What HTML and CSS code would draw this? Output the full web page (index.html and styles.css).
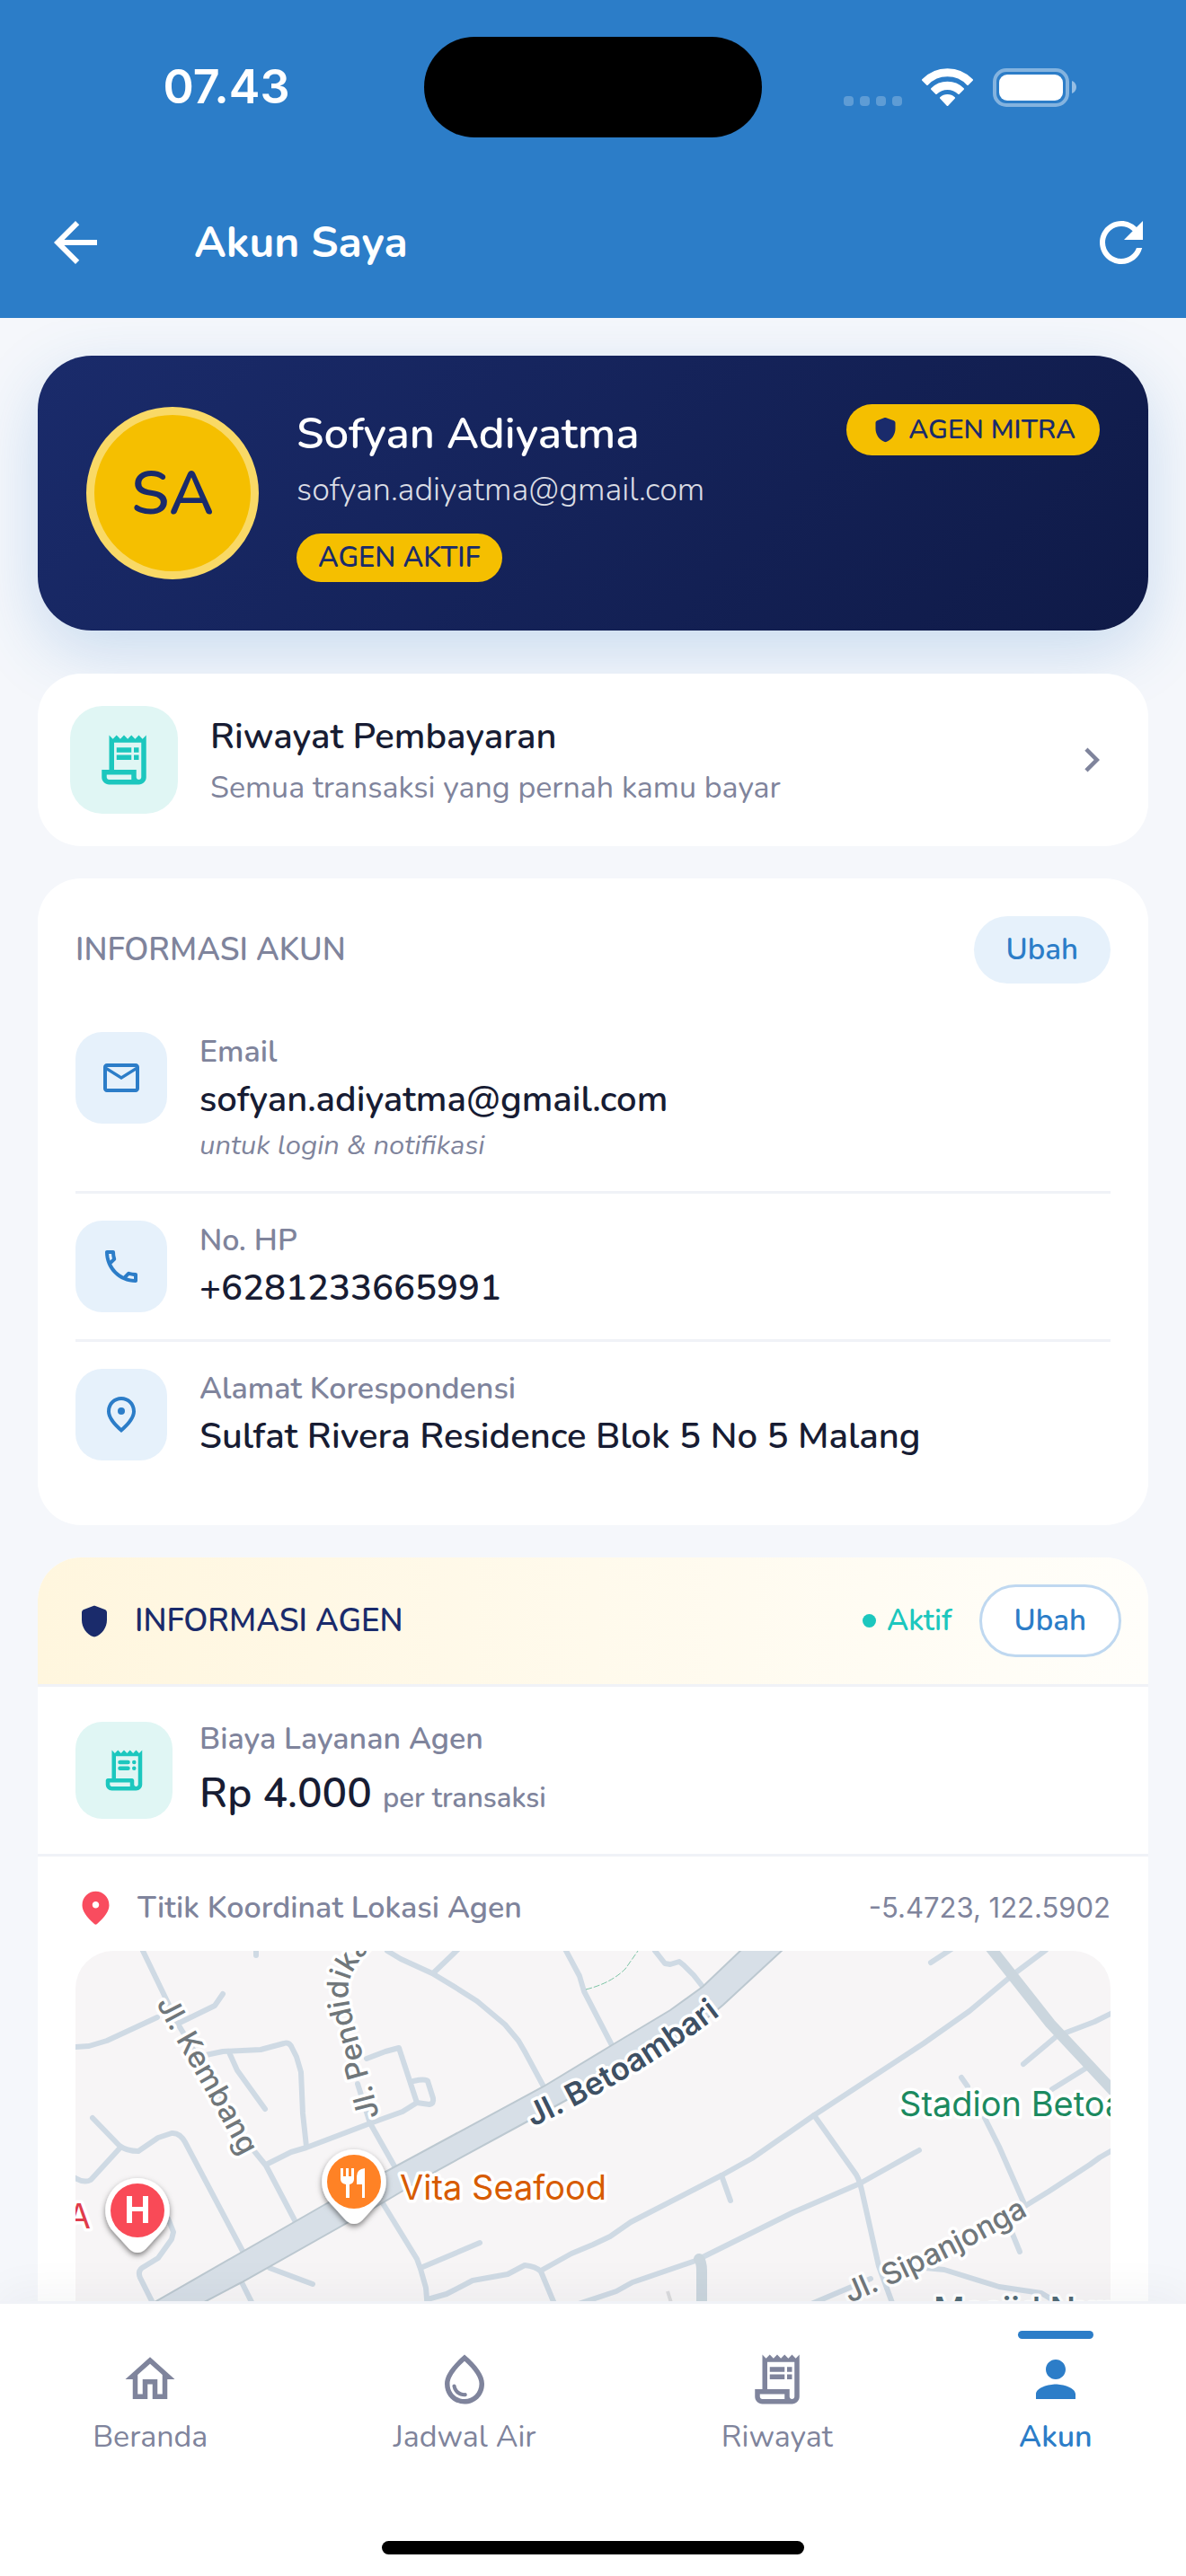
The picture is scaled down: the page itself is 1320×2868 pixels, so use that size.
FILE: index.html
```html
<!DOCTYPE html>
<html lang="id">
<head>
    <meta charset="UTF-8">
    <meta name="viewport" content="width=device-width, initial-scale=1.0">
    <title>Akun Saya</title>
    <link rel="stylesheet" href="styles.css">
</head>
<body>
    <!-- shared icons -->
    <svg class="sprite" aria-hidden="true">
        <symbol id="icon-receipt" viewBox="0 0 24 24">
            <path d="M19.5 3.5L18 2l-1.5 1.5L15 2l-1.5 1.5L12 2l-1.5 1.5L9 2 7.5 3.5 6 2v14H3v3c0 1.66 1.34 3 3 3h12c1.66 0 3-1.34 3-3V2l-1.5 1.5zM15 20H6c-.55 0-1-.45-1-1v-1h10v2zm4-1c0 .55-.45 1-1 1s-1-.45-1-1v-3H8V5h11v14z"/>
            <path d="M9 7h6v2H9zM16 7h2v2h-2zM9 10h6v2H9zM16 10h2v2h-2z"/>
        </symbol>
        <symbol id="icon-receipt-round" viewBox="0 0 24 24">
            <path d="M19.5 3.5L18 2l-1.5 1.5L15 2l-1.5 1.5L12 2l-1.5 1.5L9 2 7.5 3.5 6 2v14H4c-.55 0-1 .45-1 1v2c0 1.66 1.34 3 3 3h12c1.66 0 3-1.34 3-3V2l-1.5 1.5zM15 20H6c-.55 0-1-.45-1-1v-1h10v2zm4-1c0 .55-.45 1-1 1s-1-.45-1-1v-2c0-.55-.45-1-1-1H8V5h11v14z"/>
            <rect x="9" y="7" width="6" height="2" rx="1"/>
            <rect x="9" y="10" width="6" height="2" rx="1"/>
            <circle cx="17" cy="8" r="1"/>
            <circle cx="17" cy="11" r="1"/>
        </symbol>
        <symbol id="icon-shield" viewBox="0 0 24 24">
            <path d="M11.3 2.26l-6 2.25C4.52 4.81 4 5.55 4 6.39v4.7c0 4.83 3.13 9.37 7.43 10.75.37.12.77.12 1.14 0C16.87 20.46 20 15.93 20 11.1V6.4c0-.83-.52-1.58-1.3-1.87l-6-2.25c-.45-.18-.95-.18-1.4-.02z"/>
        </symbol>
    </svg>

    <div class="app">
        <header class="header">
            <div class="status-bar">
                <span class="status-time">07.43</span>
                <span class="island"></span>
                <div class="status-icons">
                    <div class="signal"><i></i><i></i><i></i><i></i></div>
                    <svg class="wifi" viewBox="0 0 57 42" aria-hidden="true">
                        <path d="M1 13A38 38 0 0 1 56 13L51 18A31 31 0 0 0 6 18z"/>
                        <path d="M11 23A25 25 0 0 1 46 23L41 28A18 18 0 0 0 16 28z"/>
                        <path d="M21 33A11 11 0 0 1 36 33L28.500 41z"/>
                    </svg>
                    <svg class="battery" viewBox="0 0 94 43" aria-hidden="true">
                        <rect class="battery-case" x="2" y="2" width="81" height="39" rx="13"/>
                        <rect x="7" y="7" width="71" height="29" rx="9"/>
                        <path class="battery-cap" d="M88 14c3 1 5 4 5 7s-2 6-5 7z"/>
                    </svg>
                </div>
            </div>
            <div class="toolbar">
                <button class="icon-btn" type="button" aria-label="Kembali">
                    <svg viewBox="0 0 24 24"><path d="M20 11H7.83l5.59-5.59L12 4l-8 8 8 8 1.41-1.41L7.83 13H20v-2z"/></svg>
                </button>
                <h1>Akun Saya</h1>
                <button class="icon-btn" type="button" aria-label="Muat ulang">
                    <svg viewBox="0 0 24 24"><path d="M17.65 6.35C16.2 4.9 14.21 4 12 4c-4.42 0-7.99 3.58-7.99 8s3.57 8 7.99 8c3.73 0 6.84-2.55 7.73-6h-2.08c-.82 2.33-3.04 4-5.65 4-3.31 0-6-2.69-6-6s2.69-6 6-6c1.66 0 3.14.69 4.22 1.78L13 11h7V4l-2.35 2.35z"/></svg>
                </button>
            </div>
        </header>

        <main class="content">
            <section class="profile">
                <div class="avatar">SA</div>
                <div class="profile-info">
                    <h2>Sofyan Adiyatma</h2>
                    <p>sofyan.adiyatma@gmail.com</p>
                    <span class="badge">AGEN AKTIF</span>
                </div>
                <span class="badge badge-mitra">
                    <svg viewBox="0 0 24 24"><use href="#icon-shield"/></svg>
                    AGEN MITRA
                </span>
            </section>

            <a class="card history" href="#riwayat">
                <span class="icon-box teal large">
                    <svg viewBox="0 0 24 24"><use href="#icon-receipt"/></svg>
                </span>
                <span class="history-text">
                    <span class="history-title">Riwayat Pembayaran</span>
                    <span class="history-sub">Semua transaksi yang pernah kamu bayar</span>
                </span>
                <svg class="chevron" viewBox="0 0 24 24" aria-hidden="true"><path d="M10 6L8.59 7.41 13.17 12l-4.58 4.59L10 18l6-6z"/></svg>
            </a>

            <section class="card account">
                <div class="card-head">
                    <h3>INFORMASI AKUN</h3>
                    <button class="edit-btn" type="button">Ubah</button>
                </div>
                <div class="info-row">
                    <span class="icon-box blue">
                        <svg viewBox="0 0 24 24"><path d="M22 6c0-1.1-.9-2-2-2H4c-1.1 0-2 .9-2 2v12c0 1.1.9 2 2 2h16c1.1 0 2-.9 2-2V6zm-2 0l-8 5-8-5h16zm0 12H4V8l8 5 8-5v10z"/></svg>
                    </span>
                    <div class="info-text">
                        <span class="label">Email</span>
                        <span class="value">sofyan.adiyatma@gmail.com</span>
                        <em class="hint">untuk login &amp; notifikasi</em>
                    </div>
                </div>
                <div class="info-row">
                    <span class="icon-box blue">
                        <svg viewBox="0 0 24 24"><path d="M6.54 5c.06.89.21 1.76.45 2.59l-1.2 1.2c-.41-1.2-.67-2.47-.76-3.79h1.51m9.86 12.02c.85.24 1.72.39 2.6.45v1.49c-1.32-.09-2.59-.35-3.8-.75l1.2-1.19M7.5 3H4c-.55 0-1 .45-1 1 0 9.39 7.61 17 17 17 .55 0 1-.45 1-1v-3.49c0-.55-.45-1-1-1-1.24 0-2.45-.2-3.57-.57-.1-.04-.21-.05-.31-.05-.26 0-.51.1-.71.29l-2.2 2.2c-2.83-1.45-5.15-3.76-6.59-6.59l2.2-2.2c.28-.28.36-.67.25-1.02C8.7 6.45 8.5 5.25 8.5 4c0-.55-.45-1-1-1z"/></svg>
                    </span>
                    <div class="info-text">
                        <span class="label">No. HP</span>
                        <span class="value">+6281233665991</span>
                    </div>
                </div>
                <div class="info-row">
                    <span class="icon-box blue">
                        <svg viewBox="0 0 24 24">
                            <path d="M12 2c4.2 0 8 3.22 8 8.2 0 3.32-2.67 7.25-8 11.8-5.33-4.55-8-8.48-8-11.8C4 5.22 7.8 2 12 2zm6 8.2C18 6.57 15.35 4 12 4s-6 2.57-6 6.2c0 2.34 1.95 5.44 6 9.14 4.05-3.7 6-6.8 6-9.14z"/>
                            <circle cx="12" cy="10" r="2"/>
                        </svg>
                    </span>
                    <div class="info-text">
                        <span class="label">Alamat Korespondensi</span>
                        <span class="value">Sulfat Rivera Residence Blok 5 No 5 Malang</span>
                    </div>
                </div>
            </section>

            <section class="card agent">
                <div class="agent-head">
                    <svg class="agent-shield" viewBox="0 0 24 24"><use href="#icon-shield"/></svg>
                    <h3>INFORMASI AGEN</h3>
                    <span class="status">Aktif</span>
                    <button class="edit-btn outlined" type="button">Ubah</button>
                </div>
                <div class="fee">
                    <span class="icon-box teal">
                        <svg viewBox="0 0 24 24"><use href="#icon-receipt-round"/></svg>
                    </span>
                    <div class="fee-text">
                        <span class="label">Biaya Layanan Agen</span>
                        <span class="fee-value">Rp 4.000 <small>per transaksi</small></span>
                    </div>
                </div>
                <div class="location">
                    <div class="location-head">
                        <svg class="pin" viewBox="0 0 24 24"><path d="M12 2c-4.2 0-8 3.22-8 8.2 0 3.18 2.45 6.92 7.34 11.23.38.33.95.33 1.33 0C17.55 17.12 20 13.38 20 10.2 20 5.22 16.2 2 12 2zm0 10c-1.1 0-2-.9-2-2s.9-2 2-2 2 .9 2 2-.9 2-2 2z"/></svg>
                        <span class="label">Titik Koordinat Lokasi Agen</span>
                        <span class="coords">-5.4723, 122.5902</span>
                    </div>
                    <svg class="map" viewBox="0 0 1152 480" role="img" aria-label="Peta lokasi agen">
                        <defs>
                            <path id="p-kembang" d="M90 58C113 105 150 160 190 240"/>
                            <path id="p-pendidikan" d="M338 184C328 140 307 78 304 52S314 10 350 -26"/>
                            <path id="p-betoambari" d="M509 196Q640 135 745 50"/>
                            <path id="p-sipanjonga" d="M862 392Q955 353 1075 286"/>
                            <filter id="pin-shadow" x="-50%" y="-50%" width="200%" height="200%">
                                <feDropShadow dx="0" dy="3" stdDeviation="3" flood-color="#000" flood-opacity=".5"/>
                            </filter>
                        </defs>

                        <!-- small streets -->
                        <g class="street">
                            <path d="M75 0L102 56L115 83L199 223L212 239L244 300"/>
                            <path d="M0 107L15 106L35 100L91 74M114 81L155 61L164 48"/>
                            <path d="M201 -5V5"/>
                            <path d="M145 116L164 112L206 110L232 103Q238 101 241 108L246 118L251 135L253 181L257 218"/>
                            <path d="M171 113L180 133L211 176"/>
                            <path d="M212 238L240 224L257 219L328 192L364 179L380 169L394 171Q399 170 398 164L392 145Q390 142 376 145"/>
                            <path d="M324 120L345 112L360 108L380 169"/>
                            <path d="M314 148L328 192L358 245"/>
                            <path d="M347 0L362 9L397 25L425 42L447 56L478 82L493 100L500 112L521 151"/>
                            <path d="M427 -3L399 24"/>
                            <path d="M545 -2L561 28L566 45L597 105"/>
                            <path d="M19 186L49 217Q57 223 70 223L92 208L107 203Q116 202 122 213L187 336"/>
                            <path d="M49 220L17 255Q10 259 0 253"/>
                            <path d="M103 298L109 313L107 321L92 342L74 353Q69 357 72 364L86 392"/>
                            <path d="M185 369L198 395M216 353L264 371"/>
                            <path d="M342 281L380 343L384 354L390 375L392 400"/>
                            <path d="M384 353L450 325"/>
                            <path d="M392 388L413 382L442 367L481 360L500 350Q512 351 518 357L536 400"/>
                            <path d="M518 356L552 337L576 327L595 318L618 302L719 250L753 231L822 183L944 103L995 67L1044 26L1068 8L1080 -1"/>
                            <path d="M560 393L602 379L620 369L690 345L799 291L873 259L939 222"/>
                            <path d="M719 250L729 278"/>
                            <path d="M822 183L866 245Q872 252 875 266L894 351L912 400"/>
                            <path d="M812 396L885 365"/>
                            <path d="M645 0L656 14L662 15L672 12L677 16L688 27L699 41"/>
                            <path d="M952 13L975 -2"/>
                            <path d="M1055 126L1092 95L1134 79L1154 69M1087 154L1124 131"/>
                            <path d="M986 141L993 151M1012 186L1028 218L1057 284L1083 268L1129 238L1140 230L1154 222"/>
                            <path d="M1042 313L1051 335"/>
                            <path d="M946 353L967 355L1028 374L1075 381L1090 390"/>
                        </g>
                        <path class="avenue" d="M1018 -4L1085 81L1156 157"/>
                        <path class="avenue" d="M694 343Q697 347 697 356V400"/>
                        <path class="alley" d="M659 379L664 395"/>
                        <path class="boundary" d="M568 43Q596 36 612 20L626 0"/>

                        <!-- Jl. Betoambari -->
                        <path class="main-road" d="M76 398L280 281L521 151L597 105L662 66L698 40L742 -2H788L721 60Q670 105 576 150L501 191L400 246L341 281L185 369L130 398z"/>

                        <g class="map-label">
                            <text class="road-name"><textPath href="#p-kembang">Jl. Kembang</textPath></text>
                            <text class="road-name"><textPath href="#p-pendidikan">Jl. Pendidikan</textPath></text>
                            <text class="road-name"><textPath href="#p-sipanjonga">Jl. Sipanjonga</textPath></text>
                            <text class="road-name major"><textPath href="#p-betoambari">Jl. Betoambari</textPath></text>
                            <text class="place green" x="917" y="184">Stadion Betoa</text>
                            <text class="place orange" x="361" y="277">Vita Seafood</text>
                            <text class="place red" x="17" y="309" text-anchor="end">A</text>
                            <text class="place slate" x="955" y="413">Masjid Nur</text>
                        </g>

                        <g transform="translate(69 289)">
                            <path class="marker" d="M0 -36A36 36 0 0 1 29 21L9 43Q0 51 -9 43L-29 21A36 36 0 0 1 0 -36z"/>
                            <circle class="marker-red" r="30"/>
                            <path class="marker-glyph" d="M-12 -16h6v12h12v-12h6v30h-6V1H-6v13h-6z"/>
                        </g>
                        <g transform="translate(310 257)">
                            <path class="marker" d="M0 -36A36 36 0 0 1 29 21L9 43Q0 51 -9 43L-29 21A36 36 0 0 1 0 -36z"/>
                            <circle class="marker-orange" r="30"/>
                            <path class="marker-glyph" d="M-15 -15h3v9h3v-9h3v9h3v-9h3v12q0 5 -5 6v15h-4V3q-6 -1 -6 -6zM12 -15v33H9V3H3V-6q0 -8 9 -9z"/>
                        </g>
                    </svg>
                </div>
            </section>
        </main>

        <nav class="bottom-nav">
            <div class="tabs">
                <a class="tab" href="#beranda">
                    <svg viewBox="0 0 24 24"><path d="M12 5.69l5 4.5V18h-2v-6H9v6H7v-7.81l5-4.5M12 3L2 12h3v8h6v-6h2v6h6v-8h3L12 3z"/></svg>
                    Beranda
                </a>
                <a class="tab" href="#jadwal">
                    <svg viewBox="0 0 24 24">
                        <path d="M12 2c-5.33 4.55-8 8.48-8 11.8 0 4.98 3.8 8.2 8 8.2s8-3.22 8-8.2c0-3.32-2.67-7.25-8-11.8zm0 18c-3.35 0-6-2.57-6-6.2 0-2.34 1.95-5.44 6-9.14 4.05 3.7 6 6.79 6 9.14 0 3.63-2.65 6.2-6 6.2z"/>
                        <path d="M7.83 14c.37 0 .67.26.74.62.41 2.22 2.28 2.98 3.64 2.87.43-.02.79.32.79.75 0 .4-.32.73-.72.75-2.13.13-4.62-1.09-5.19-4.12-.08-.45.28-.87.74-.87z"/>
                    </svg>
                    Jadwal Air
                </a>
                <a class="tab" href="#riwayat">
                    <svg viewBox="0 0 24 24"><use href="#icon-receipt"/></svg>
                    Riwayat
                </a>
                <a class="tab active" href="#akun">
                    <svg viewBox="0 0 24 24"><path d="M12 12c2.21 0 4-1.79 4-4s-1.79-4-4-4-4 1.79-4 4 1.79 4 4 4zm0 2c-2.67 0-8 1.34-8 4v2h16v-2c0-2.66-5.33-4-8-4z"/></svg>
                    Akun
                </a>
            </div>
            <div class="home-bar"></div>
        </nav>
    </div>
</body>
</html>
```
FILE: styles.css
```css
:root {
    --blue: #2c7dc8;
    --navy: #1a2b6b;
    --yellow: #f5bf00;
    --teal: #1cc7be;
    --dark: #171c33;
    --grey: #7f849c;
    --line: #f0f2f7;
    --font-ui: Nunito, 'Open Sans', sans-serif;
    --font-system: Inter, sans-serif;
}

* { box-sizing: border-box; margin: 0; padding: 0; }

body {
    background: #f5f7fb;
    font-family: var(--font-ui);
    font-size: 34px;
    color: var(--dark);
}

a { color: inherit; text-decoration: none; }

button {
    border: none;
    background: none;
    font-family: inherit;
    cursor: pointer;
}

svg { display: block; fill: currentColor; flex-shrink: 0; }

.sprite { width: 0; height: 0; position: absolute; }

.app {
    display: flex;
    flex-direction: column;
    height: 100vh;
}

/* header */
.header {
    background: var(--blue);
    color: #fff;
    flex-shrink: 0;
}

.status-bar {
    display: grid;
    grid-template-columns: 1fr 376px 1fr;
    align-items: center;
    height: 186px;
    padding-top: 8px;
}

.status-time {
    font-family: var(--font-system);
    font-size: 52px;
    font-weight: 600;
    line-height: 60px;
    text-align: center;
    padding-left: 32px;
}

.island {
    height: 112px;
    border-radius: 56px;
    background: #000;
}

.status-icons {
    display: flex;
    align-items: center;
    justify-content: center;
    gap: 22px;
    padding-right: 30px;
}

.signal {
    display: flex;
    gap: 7px;
    padding-top: 30px;
}

.signal i {
    width: 11px;
    height: 11px;
    border-radius: 4px;
    background: rgba(255, 255, 255, 0.24);
}

.wifi {
    width: 57px;
    height: 42px;
    stroke: currentColor;
    stroke-width: 2;
    stroke-linejoin: round;
}

.battery { width: 94px; height: 43px; }

.battery-case {
    fill: none;
    stroke: #fff;
    stroke-width: 4;
    opacity: 0.42;
}

.battery-cap { opacity: 0.5; }

.toolbar {
    display: flex;
    align-items: center;
    height: 168px;
    padding: 0 36px 0 48px;
}

.icon-btn {
    color: #fff;
    width: 72px;
    height: 72px;
}

.toolbar h1 {
    flex: 1;
    margin-left: 96px;
    font-size: 48px;
    font-weight: 700;
    line-height: 66px;
}

/* content */
.content {
    flex: 1;
    min-height: 0;
    overflow: hidden;
    padding: 42px 42px 0;
}

.profile {
    display: flex;
    align-items: center;
    gap: 42px;
    padding: 54px;
    margin-bottom: 48px;
    border-radius: 60px;
    background: linear-gradient(135deg, var(--navy) 0%, #0f1a47 100%);
    box-shadow: 0 24px 72px rgba(44, 125, 200, 0.22);
    color: #fff;
}

.avatar {
    display: flex;
    align-items: center;
    justify-content: center;
    width: 192px;
    height: 192px;
    border: 9px solid #f9d966;
    border-radius: 50%;
    background: var(--yellow);
    color: var(--navy);
    font-size: 68px;
    font-weight: 600;
}

.profile-info { flex: 1; }

.profile-info h2 {
    font-size: 49px;
    font-weight: 600;
    line-height: 66px;
    margin-bottom: 6px;
}

.profile-info p {
    font-size: 36px;
    font-weight: 300;
    line-height: 48px;
    margin-bottom: 24px;
    color: rgba(255, 255, 255, 0.85);
}

.badge {
    display: inline-flex;
    align-items: center;
    height: 54px;
    padding: 0 24px;
    border-radius: 30px;
    background: var(--yellow);
    color: var(--navy);
    font-size: 31px;
    font-weight: 600;
    vertical-align: top;
}

.badge-mitra {
    align-self: flex-start;
    height: 57px;
    padding: 0 27px;
    gap: 9px;
    font-size: 30px;
}

.badge svg { width: 33px; height: 33px; }

.card {
    display: block;
    background: #fff;
    border-radius: 48px;
    margin-bottom: 36px;
    position: relative;
}

.icon-box {
    display: flex;
    align-items: center;
    justify-content: center;
    flex-shrink: 0;
    width: 102px;
    height: 102px;
    border-radius: 30px;
}

.icon-box svg { width: 48px; height: 48px; }

.icon-box.blue { background: #e6f1fb; color: var(--blue); }
.icon-box.teal { background: #e0f6f4; color: var(--teal); }
.icon-box.large { width: 120px; height: 120px; border-radius: 36px; }
.icon-box.large svg { width: 66px; height: 66px; }

.history {
    display: flex;
    align-items: center;
    gap: 36px;
    padding: 36px;
}

.history-text {
    display: flex;
    flex-direction: column;
    gap: 6px;
    flex: 1;
}

.history-title {
    font-size: 40px;
    font-weight: 600;
    line-height: 57px;
}

.history-sub {
    color: var(--grey);
    font-weight: 400;
    line-height: 45px;
}

.chevron { width: 54px; height: 54px; color: var(--grey); }

.account { padding: 42px; }

.card-head {
    display: flex;
    align-items: center;
    justify-content: space-between;
    margin-bottom: 24px;
}

h3 {
    font-size: 35px;
    font-weight: 600;
    line-height: 45px;
}

.card-head h3 { color: var(--grey); }

.edit-btn {
    height: 75px;
    padding: 0 36px;
    border-radius: 42px;
    background: #e6f1fb;
    color: var(--blue);
    font-size: 33px;
    font-weight: 600;
}

.edit-btn.outlined {
    height: 81px;
    border: 3px solid #bfd8f0;
    background: #fff;
}

.info-row {
    display: flex;
    gap: 36px;
    padding: 30px 0;
    border-bottom: 3px solid var(--line);
}

.info-row:last-child { border-bottom: none; }

.info-text {
    display: flex;
    flex-direction: column;
    gap: 3px;
}

.label {
    color: var(--grey);
    font-size: 34px;
    font-weight: 600;
    line-height: 45px;
}

.value {
    font-size: 40px;
    font-weight: 600;
    line-height: 54px;
}

.hint {
    color: var(--grey);
    font-size: 31px;
    line-height: 42px;
}

/* agent card */
.agent { overflow: hidden; }

.agent-head {
    display: flex;
    align-items: center;
    padding: 30px 30px 30px 42px;
    background: linear-gradient(90deg, #fff6de 0%, #fffefa 100%);
    border-bottom: 3px solid var(--line);
    color: var(--navy);
}

.agent-shield { width: 42px; height: 42px; }

.agent-head h3 {
    flex: 1;
    margin-left: 24px;
}

.status {
    display: flex;
    align-items: center;
    gap: 12px;
    margin-right: 30px;
    color: var(--teal);
    font-size: 33px;
    font-weight: 600;
}

.status::before {
    content: '';
    width: 15px;
    height: 15px;
    border-radius: 50%;
    background: currentColor;
}

.fee {
    display: flex;
    align-items: center;
    gap: 30px;
    padding: 33px 42px;
    border-bottom: 3px solid var(--line);
}

.fee .icon-box { width: 108px; height: 108px; }
.fee .icon-box svg { width: 54px; height: 54px; }

.fee-text {
    display: flex;
    flex-direction: column;
}

.fee-text .label { line-height: 51px; }
.location .label { line-height: 48px; }

.fee-value {
    font-size: 46px;
    font-weight: 600;
    line-height: 69px;
}

.fee-value small {
    color: var(--grey);
    font-size: 31px;
    line-height: 1;
}

.location { padding: 33px 42px 42px; }

.location-head {
    display: flex;
    align-items: center;
    margin-bottom: 24px;
}

.pin {
    width: 45px;
    height: 45px;
    margin-right: 24px;
    color: #f94c5f;
}

.coords {
    margin-left: auto;
    font-family: var(--font-system);
    font-size: 31px;
    line-height: 48px;
    color: var(--grey);
}

/* map */
.map {
    width: 100%;
    height: auto;
    border-radius: 42px;
    background: #f7f5f6;
    overflow: hidden;
}

.street {
    fill: none;
    stroke: #cfdae4;
    stroke-width: 6;
    stroke-linecap: round;
    stroke-linejoin: round;
}

.avenue {
    fill: none;
    stroke: #cbd6de;
    stroke-width: 12;
    stroke-linecap: round;
    stroke-linejoin: round;
}

.alley { fill: none; stroke: #dcdcde; stroke-width: 4; }

.boundary {
    fill: none;
    stroke: #7cc4a5;
    stroke-width: 1;
    stroke-dasharray: 7 2;
}

.main-road {
    fill: #d7dfe7;
    stroke: #bcc8d0;
    stroke-width: 2;
}

.map-label {
    font-family: var(--font-system);
    stroke: #fff;
    stroke-width: 7;
    stroke-linejoin: round;
    paint-order: stroke;
}

.road-name {
    fill: #70777b;
    font-size: 33px;
    font-weight: 500;
}

.road-name.major {
    fill: #3e5064;
    font-size: 35px;
    font-weight: 600;
}

.place { font-size: 38px; }
.place.green { fill: #1c8a60; }
.place.orange { fill: #d75b00; }
.place.red { fill: #e03c4b; }
.place.slate { fill: #526a76; font-weight: 500; }

.marker { fill: #fff; filter: url(#pin-shadow); }
.marker-red { fill: #f94a57; }
.marker-orange { fill: #ff8225; }
.marker-glyph { fill: #fff; }

/* bottom navigation */
.bottom-nav {
    position: relative;
    flex-shrink: 0;
    padding-bottom: 24px;
    border-top: 3px solid var(--line);
    background: #fff;
    box-shadow: 0 -6px 48px rgba(20, 30, 60, 0.05);
}

.tabs {
    display: flex;
    justify-content: space-around;
    padding-top: 30px;
}

.tab {
    display: flex;
    flex-direction: column;
    align-items: center;
    color: var(--grey);
    font-weight: 400;
    line-height: 42px;
}

.tab::before {
    content: '';
    width: 84px;
    height: 9px;
    margin-bottom: 12px;
    border-radius: 5px;
}

.tab svg {
    width: 66px;
    height: 66px;
    margin-bottom: 10px;
}

.tab.active { color: var(--blue); font-weight: 600; }
.tab.active::before { background: var(--blue); }

.home-bar {
    width: 470px;
    height: 15px;
    margin: 95px auto 0;
    border-radius: 8px;
    background: #000;
}
```
